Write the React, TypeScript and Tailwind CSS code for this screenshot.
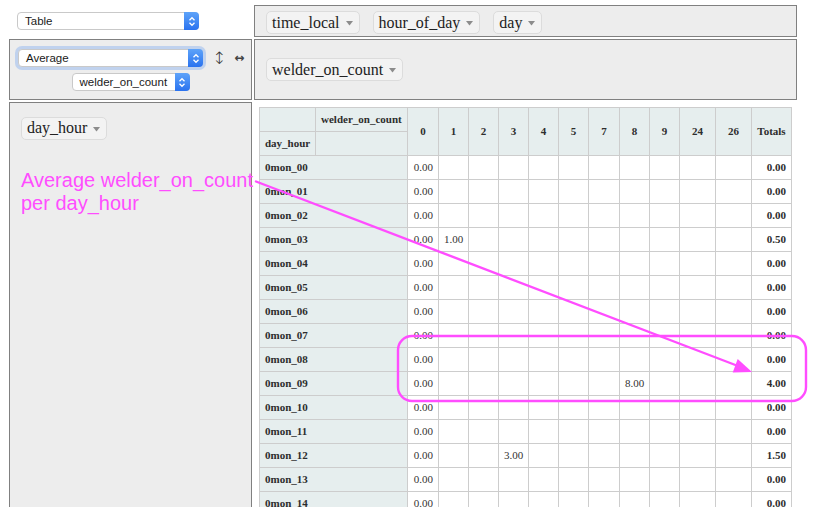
import React from 'react';

const COLS = ['0', '1', '2', '3', '4', '5', '7', '8', '9', '24', '26'];

const ROWS = Array.from({ length: 15 }, (_, i) => `0mon_${String(i).padStart(2, '0')}`);

// values other than the always-present 0.00 in column "0"
const EXTRA: Record<number, { col: string; val: string; total: string }> = {
  3: { col: '1', val: '1.00', total: '0.50' },
  9: { col: '8', val: '8.00', total: '4.00' },
  12: { col: '3', val: '3.00', total: '1.50' },
};

const Chip = ({ label }: { label: string }) => (
  <span className="inline-flex h-[23px] items-center whitespace-nowrap rounded-[5px] border border-[#dcdcdc] bg-[#f3f3f3] px-[5px] font-['Liberation_Serif',serif] text-[16px] leading-none text-[#222]">
    {label}
    <svg className="ml-[5px] mt-[2px]" width="9" height="5" viewBox="0 0 9 5">
      <path d="M1 0H8L4.5 4.5Z" fill="#8c8c8c" />
    </svg>
  </span>
);

const NativeSelect = ({ label, className }: { label: string; className: string }) => (
  <div className={`flex h-[18px] items-stretch rounded-[4px] border border-[#c9c9c9] bg-white ${className}`}>
    <span className="flex-1 pl-[7px] font-['Liberation_Sans',Arial,sans-serif] text-[11.5px] leading-[16px] text-[#1a1a1a]">
      {label}
    </span>
    <span className="-my-px -mr-px flex w-[15px] items-center justify-center rounded-r-[4px] bg-linear-to-b from-[#5ea3f9] to-[#2a72ef]">
      <svg width="8" height="11" viewBox="0 0 8 11">
        <path d="M1.5 4.2L4 1.7L6.5 4.2M1.5 6.8L4 9.3L6.5 6.8" stroke="white" strokeWidth="1.3" fill="none" />
      </svg>
    </span>
  </div>
);

const PivotTable = () => (
  <table className="table-fixed w-[533px] border-collapse font-['Liberation_Serif',serif] text-[11px] text-[#2d2d2d]">
    <colgroup>
      <col className="w-[56px]" />
      <col className="w-[92px]" />
      <col className="w-[31px]" />
      <col className="w-[30px]" />
      <col className="w-[30px]" />
      <col className="w-[30px]" />
      <col className="w-[30px]" />
      <col className="w-[30px]" />
      <col className="w-[31px]" />
      <col className="w-[30px]" />
      <col className="w-[30px]" />
      <col className="w-[36px]" />
      <col className="w-[36px]" />
      <col className="w-[40px]" />
    </colgroup>
    <thead>
      <tr className="h-[24px]">
        <th className="border border-[#cdcdcd] bg-[#e6eeee]"></th>
        <th className="border border-[#cdcdcd] bg-[#e6eeee] px-[5px] text-left font-bold whitespace-nowrap">welder_on_count</th>
        {COLS.map((c) => (
          <th key={c} rowSpan={2} className="border border-[#cdcdcd] bg-[#e6eeee] text-center font-bold">
            {c}
          </th>
        ))}
        <th rowSpan={2} className="border border-[#cdcdcd] bg-[#e6eeee] text-center font-bold">
          Totals
        </th>
      </tr>
      <tr className="h-[24px]">
        <th className="border border-[#cdcdcd] bg-[#e6eeee] px-[5px] text-left font-bold whitespace-nowrap">day_hour</th>
        <th className="border border-[#cdcdcd] bg-[#e6eeee]"></th>
      </tr>
    </thead>
    <tbody>
      {ROWS.map((r, i) => {
        const extra = EXTRA[i];
        return (
          <tr key={r} className="h-[24px]">
            <th colSpan={2} className="border border-[#cdcdcd] bg-[#e6eeee] px-[5px] text-left font-bold">
              {r}
            </th>
            {COLS.map((c) => (
              <td key={c} className="border border-[#cdcdcd] bg-white px-[5px] text-right text-[#333]">
                {c === '0' ? '0.00' : extra && extra.col === c ? extra.val : ''}
              </td>
            ))}
            <td className="border border-[#cdcdcd] bg-white px-[5px] text-right font-bold">
              {extra ? extra.total : '0.00'}
            </td>
          </tr>
        );
      })}
    </tbody>
  </table>
);

export default function App() {
  return (
    <div className="relative h-[507px] w-[838px] overflow-hidden bg-white">
      <div className="grid grid-cols-[243px_543px] grid-rows-[32px_61px_500px] gap-[2px] pl-[9px] pt-[5px]">
        {/* renderer picker */}
        <div className="pl-[8px] pt-[7px]">
          <NativeSelect label="Table" className="w-[182px]" />
        </div>

        {/* unused attributes */}
        <div className="flex items-start gap-[13px] border border-[#808080] bg-[#ededed] pl-[11px] pt-[5px]">
          <Chip label="time_local" />
          <Chip label="hour_of_day" />
          <Chip label="day" />
        </div>

        {/* aggregator */}
        <div className="border border-[#808080] bg-[#ededed] pl-[8px] pt-[9px]">
          <div className="flex items-center">
            <NativeSelect
              label="Average"
              className="w-[185px] shadow-[0_0_0_3px_rgba(110,160,240,0.35)]"
            />
            <span className="ml-[9px] font-['DejaVu_Sans',sans-serif] text-[17px] font-light leading-none text-[#333]">↕</span>
            <span className="ml-[8px] font-['DejaVu_Sans',sans-serif] text-[12px] font-bold leading-none text-[#444]">↔</span>
          </div>
          <div className="mt-[6px] flex justify-center pr-[8px]">
            <NativeSelect label="welder_on_count" className="w-[118px]" />
          </div>
        </div>

        {/* column attributes */}
        <div className="flex items-center border border-[#808080] bg-[#ededed] pl-[11px]">
          <Chip label="welder_on_count" />
        </div>

        {/* row attributes */}
        <div className="border border-[#808080] bg-[#ededed] pl-[11px] pt-[12px]">
          <Chip label="day_hour" />
        </div>

        {/* output */}
        <div className="pl-[5px] pt-[5px]">
          <PivotTable />
        </div>
      </div>

      {/* annotation overlay */}
      <div className="pointer-events-none absolute left-[21px] top-[169px] font-['Liberation_Sans',Arial,sans-serif] text-[20px] leading-[23px] text-[#ff4dff]">
        <div>Average welder_on_count</div>
        <div>per day_hour</div>
      </div>
      <svg className="pointer-events-none absolute left-0 top-0" width="838" height="507" viewBox="0 0 838 507">
        <line x1="256" y1="181.5" x2="738" y2="366" stroke="#ff4dff" strokeWidth="2.4" strokeLinecap="round" />
        <polygon points="752,372 732.7,372.6 737.7,359.1" fill="#ff4dff" />
        <rect x="398" y="336" width="408" height="65" rx="14" ry="14" fill="none" stroke="#ff4dff" strokeWidth="2.4" />
      </svg>
    </div>
  );
}
